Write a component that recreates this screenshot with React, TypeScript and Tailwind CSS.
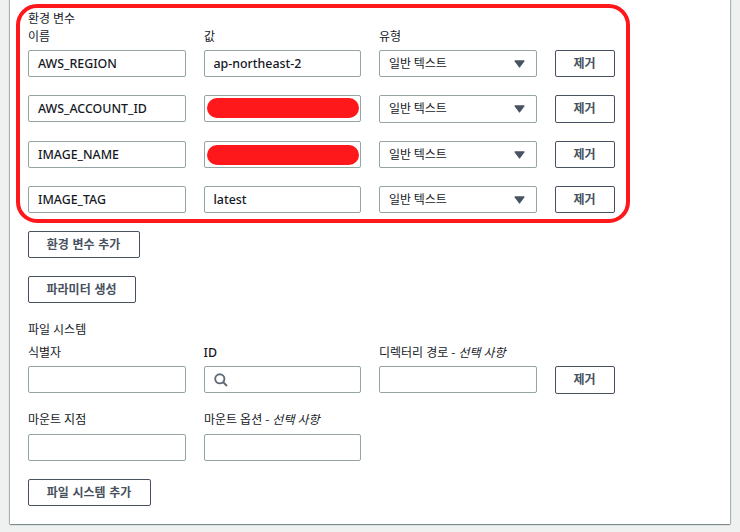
import type { ReactNode } from "react";

const GRID = "grid grid-cols-[158px_157px_158px_60px] gap-x-[18px]";

function Input({ children, masked, className = "pl-[9px]" }: { children?: ReactNode; masked?: string; className?: string }) {
  return (
    <div className={`flex h-[27px] items-center rounded-[2px] border border-[#95a5a6] bg-white font-['Noto_Sans',sans-serif] text-[12.4px] font-medium leading-[20px] text-[#16191f] ${className}`}>
      {masked ? <span className={`-ml-[6.5px] h-5 w-[152px] shrink-0 rounded-full bg-[#ff181b] ${masked}`} /> : children}
    </div>
  );
}

function Select({ height }: { height: string }) {
  return (
    <div className={`flex items-start justify-between rounded-[2px] border border-[#95a5a6] bg-white pl-[9px] pr-3 ${height}`}>
      <span className="mt-[2px] text-[12px] leading-[20px]">일반 텍스트</span>
      <svg width="11" height="8" viewBox="0 0 11 8" className="-mr-px mt-[9px]">
        <path d="M1 0.9H10L5.5 7Z" fill="#485362" stroke="#485362" strokeWidth="1.2" strokeLinejoin="round" />
      </svg>
    </div>
  );
}

function Button({ children, className }: { children: ReactNode; className: string }) {
  return (
    <button className={`flex items-start justify-center rounded-[2px] border border-[#485160] bg-white pr-px pt-[2px] text-[12px] font-bold leading-[20px] text-[#485160] [word-spacing:1px] ${className}`}>
      {children}
    </button>
  );
}

function Label({ children, optional }: { children: ReactNode; optional?: boolean }) {
  return (
    <div className="h-5 whitespace-nowrap text-[12px] leading-[20px] [word-spacing:0.3px]">
      {children}
      {optional && <span> - <i>선택 사항</i></span>}
    </div>
  );
}

const rows = [
  { name: "AWS_REGION", value: "ap-northeast-2", gap: "mb-[18px]", h: "h-[27px]" },
  { name: "AWS_ACCOUNT_ID", mask: "-mt-px", gap: "mb-[19px]", h: "h-[28px]" },
  { name: "IMAGE_NAME", mask: "mt-px", gap: "mb-[18px]", h: "h-[27px]" },
  { name: "IMAGE_TAG", value: "latest", gap: "", h: "h-[27px]" },
];

export default function App() {
  return (
    <div className="h-[532px] w-[740px] overflow-hidden bg-[#eff1f1] px-[10px] font-['Noto_Sans_CJK_KR',sans-serif] text-[#16191f]">
      <main className="relative h-[524px] bg-white px-[18px] pt-2 shadow-[0_1px_1px_0_#7f8c8d,1px_0_1px_0_#b4bcbc,-1px_0_1px_0_#b4bcbc]">
        <Label>환경 변수</Label>
        <div className={`${GRID} -mt-[2px] h-6`}>
          <Label>이름</Label>
          <Label>값</Label>
          <Label>유형</Label>
        </div>
        {rows.map((r) => (
          <div key={r.name} className={`${GRID} h-[27px] items-start ${r.gap}`}>
            <Input>{r.name}</Input>
            <Input masked={r.mask} className="pl-[8.5px]">{r.value}</Input>
            <Select height={r.h} />
            <Button className={r.h}>제거</Button>
          </div>
        ))}
        <Button className="mt-[18px] h-[27px] w-[112px]">환경 변수 추가</Button>
        <Button className="mt-[18px] h-[27px] w-[108px]">파라미터 생성</Button>
        <div className="mt-[16px]"><Label>파일 시스템</Label></div>
        <div className={`${GRID} mt-[3px] h-6`}>
          <Label>식별자</Label>
          <Label><span className="-ml-[0.5px] font-['Noto_Sans',sans-serif] text-[12.4px] font-medium">ID</span></Label>
          <Label optional>디렉터리 경로</Label>
        </div>
        <div className={`${GRID} h-[27px] items-start`}>
          <Input />
          <Input className="pl-[8.5px]">
            <svg width="14" height="14" viewBox="0 0 14 14" fill="none" stroke="#606b75" strokeWidth="1.9">
              <circle cx="5.8" cy="5.8" r="4.6" />
              <path d="M9 9L13 13" />
            </svg>
          </Input>
          <Input />
          <Button className="h-[28px]">제거</Button>
        </div>
        <div className={`${GRID} mt-[16px] h-[25px]`}>
          <Label>마운트 지점</Label>
          <Label optional>마운트 옵션</Label>
        </div>
        <div className={GRID}>
          <Input />
          <Input />
        </div>
        <Button className="mt-[18px] h-[27px] w-[123px]">파일 시스템 추가</Button>
        <div className="pointer-events-none absolute left-[6px] top-1 h-[219px] w-[614px] rounded-[21px] border-4 border-[#ff181b]" />
      </main>
    </div>
  );
}
